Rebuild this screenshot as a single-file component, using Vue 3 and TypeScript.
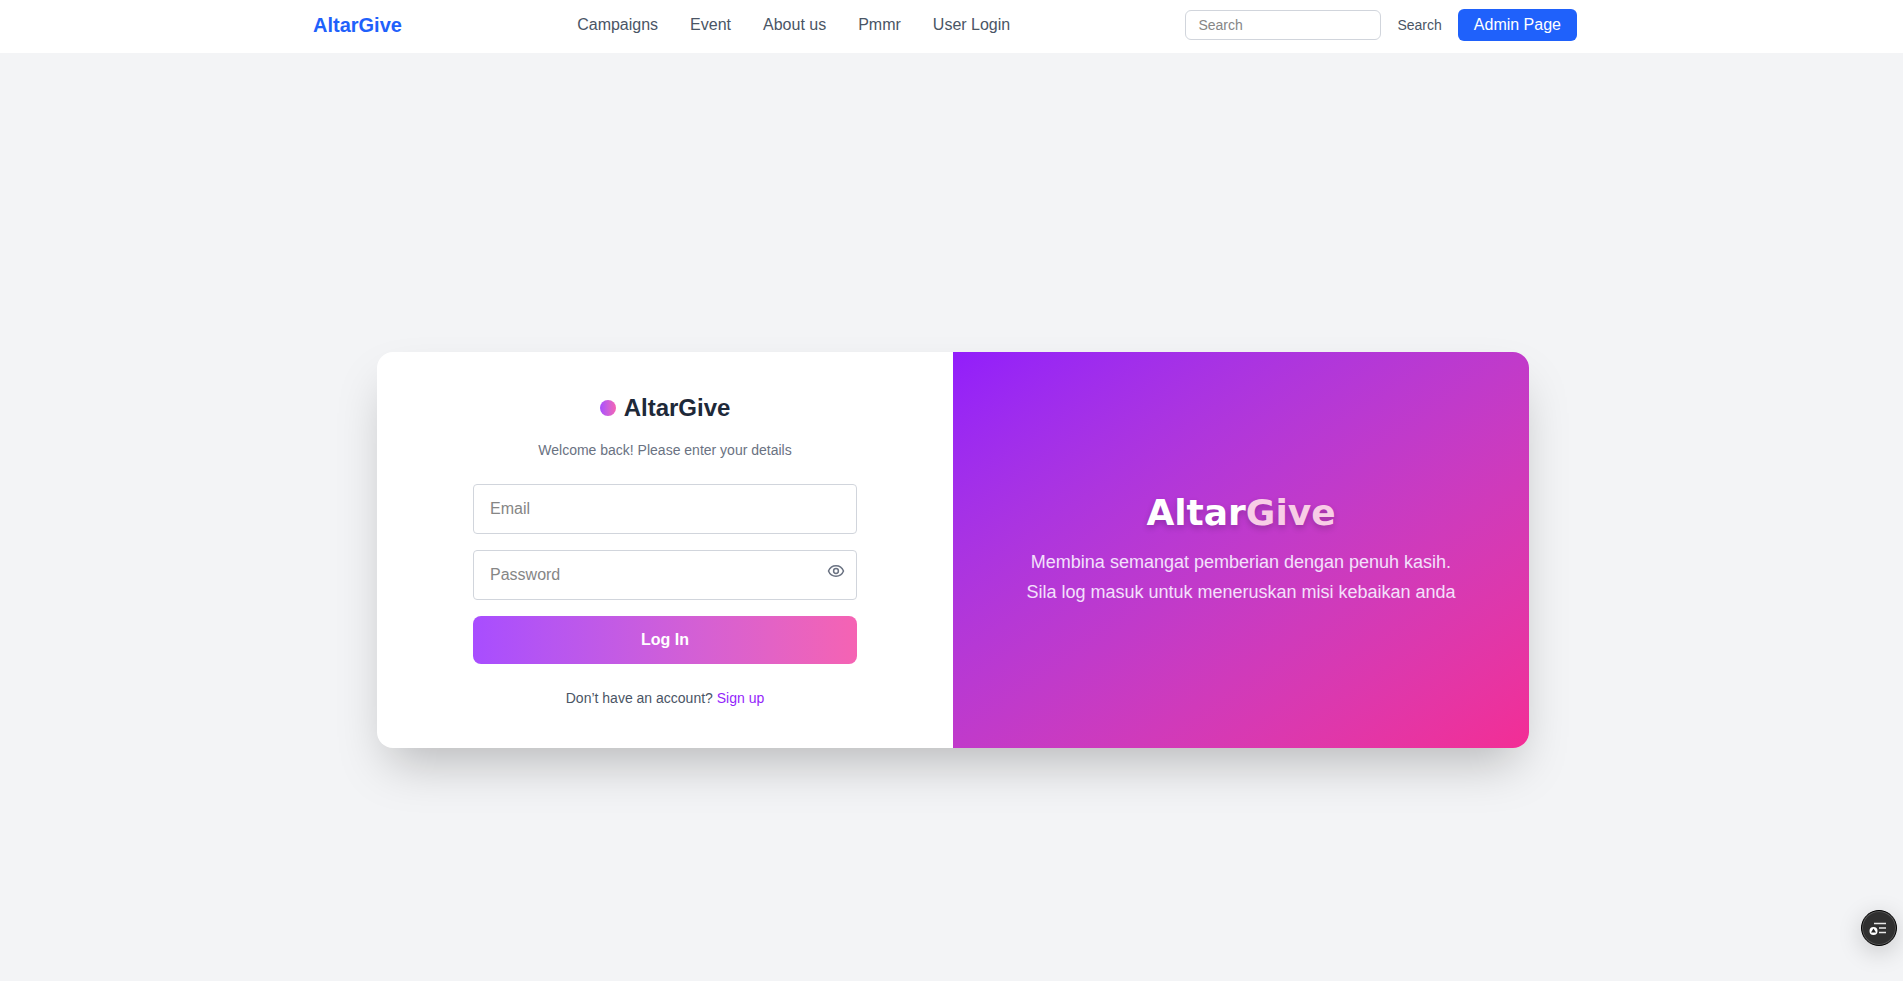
<script setup lang="ts">
import { ref } from 'vue'

const links: string[] = ['Campaigns', 'Event', 'About us', 'Pmmr', 'User Login']
const query = ref('')
const email = ref('')
const password = ref('')
const showPassword = ref(false)
</script>

<template>
  <div class="page">
    <header class="topbar">
      <div class="topbar-inner">
        <a href="#" class="brand">AltarGive</a>
        <nav class="links" aria-label="Main">
          <a v-for="link in links" :key="link" href="#">{{ link }}</a>
        </nav>
        <form class="tools" @submit.prevent>
          <input v-model="query" class="search" type="text" placeholder="Search" aria-label="Search" />
          <button type="submit" class="search-button">Search</button>
          <a href="#" class="admin">Admin Page</a>
        </form>
      </div>
    </header>

    <main class="main">
      <section class="card">
        <div class="login">
          <form class="login-form" @submit.prevent>
            <h1 class="title"><span class="dot"></span>AltarGive</h1>
            <p class="welcome">Welcome back! Please enter your details</p>
            <div class="fields">
              <input v-model="email" class="field" type="email" placeholder="Email" aria-label="Email" />
              <div class="password">
                <input
                  v-model="password"
                  class="field"
                  :type="showPassword ? 'text' : 'password'"
                  placeholder="Password"
                  aria-label="Password"
                />
                <button
                  type="button"
                  class="eye"
                  aria-label="Show password"
                  @click="showPassword = !showPassword"
                >
                  <svg viewBox="0 0 20 20" fill="none" stroke="currentColor" stroke-width="1.5">
                    <path d="M2.500 10C3.800 6.700 6.600 4.800 10 4.800S16.200 6.700 17.500 10C16.200 13.300 13.400 15.200 10 15.200S3.800 13.300 2.500 10Z" />
                    <circle cx="10" cy="10" r="2.400" />
                  </svg>
                </button>
              </div>
              <button type="submit" class="submit">Log In</button>
            </div>
            <p class="signup">Don’t have an account? <a href="#">Sign up</a></p>
          </form>
        </div>
        <div class="promo">
          <h2 class="promo-title">Altar<span>Give</span></h2>
          <p class="promo-text">
            Membina semangat pemberian dengan penuh kasih.<br />
            Sila log masuk untuk meneruskan misi kebaikan anda
          </p>
        </div>
      </section>
    </main>

    <button type="button" class="float" aria-label="Accessibility menu">
      <svg viewBox="0 0 34 34" fill="none">
        <path d="M12 12.500H24M17 17H24M17 21.500H24" stroke="#e8e8e8" stroke-width="1.500" />
        <circle cx="11.500" cy="20" r="4" fill="#fff" />
        <path d="M11.500 17.500L14 21.500H9Z" fill="#222" />
      </svg>
    </button>
  </div>
</template>

<style>
body {
  margin: 0;
}
</style>

<style scoped>
.page {
  min-height: 100vh;
  display: flex;
  flex-direction: column;
  background: #f3f4f6;
  font-family: "Liberation Sans", Arial, sans-serif;
  font-size: 16px;
  line-height: 24px;
}
.page *,
.page {
  box-sizing: border-box;
}
a {
  color: inherit;
  text-decoration: none;
}
button,
input {
  font-family: inherit;
}
button {
  border: 0;
  padding: 0;
  cursor: pointer;
}
h1,
h2,
p {
  margin: 0;
}
input::placeholder {
  color: #868686;
  opacity: 1;
}
.topbar {
  background: #fff;
  padding: 9px 0 12px 3px;
}
.topbar-inner {
  max-width: 1280px;
  margin: 0 auto;
  padding-right: 16px;
  display: flex;
  align-items: center;
  justify-content: space-between;
}
.brand {
  color: #1f61fb;
  font-size: 20px;
  line-height: 28px;
  font-weight: 700;
}
.links {
  display: flex;
  gap: 32px;
  color: #4a5565;
}
.tools {
  display: flex;
  align-items: center;
  gap: 16px;
}
.search {
  width: 196px;
  height: 30px;
  padding: 4px 12px;
  border: 1px solid #d1d5dc;
  border-radius: 6px;
  font-size: 14px;
  background: #fff;
}
.search-button {
  background: none;
  color: #4a5565;
  font-size: 14px;
  line-height: 20px;
}
.admin {
  padding: 4px 16px;
  border-radius: 6px;
  background: #1f61fb;
  color: #fff;
}
.main {
  flex: 1;
  display: flex;
  align-items: center;
  justify-content: center;
  padding: 66px 0 0 3px;
}
.card {
  width: 100%;
  max-width: 1152px;
  display: grid;
  grid-template-columns: 1fr 1fr;
  border-radius: 16px;
  overflow: hidden;
  background: #fff;
  box-shadow: 0 25px 50px -12px rgba(0, 0, 0, 0.25);
}
.login {
  display: flex;
  justify-content: center;
  padding: 40px;
}
.login-form {
  width: 100%;
  max-width: 384px;
  text-align: center;
}
.title {
  display: flex;
  align-items: center;
  justify-content: center;
  gap: 8px;
  color: #1e2939;
  font-size: 24px;
  line-height: 32px;
  font-weight: 700;
}
.dot {
  width: 16px;
  height: 16px;
  border-radius: 50%;
  background: linear-gradient(to right in oklab, #a84dff, #f563b3);
}
.welcome {
  margin: 16px 0 24px;
  color: #6a7282;
  font-size: 14px;
  line-height: 20px;
}
.fields {
  display: grid;
  gap: 16px;
}
.field {
  display: block;
  width: 100%;
  height: 50px;
  padding: 12px 16px;
  border: 1px solid #d1d5dc;
  border-radius: 4px;
  background: #fff;
  font-size: 16px;
}
.password {
  position: relative;
}
.eye {
  position: absolute;
  top: 11px;
  right: 11px;
  width: 20px;
  height: 20px;
  background: none;
  color: #6a7282;
}
.eye svg,
.float svg {
  display: block;
  width: 100%;
  height: 100%;
}
.submit {
  height: 48px;
  border-radius: 8px;
  background: linear-gradient(to right in oklab, #a84dff, #f563b3);
  color: #fff;
  font-size: 16px;
  font-weight: 700;
}
.signup {
  margin-top: 24px;
  color: #4a5565;
  font-size: 14px;
  line-height: 20px;
}
.signup a {
  color: #941ffb;
}
.promo {
  display: flex;
  flex-direction: column;
  align-items: center;
  justify-content: center;
  gap: 14px;
  padding: 40px;
  text-align: center;
  color: #fff;
  background: linear-gradient(to bottom right in oklab, #921dfb, #f32d95);
}
.promo-title {
  font-family: "Arial Black", "DejaVu Sans", sans-serif;
  font-size: 36px;
  line-height: 40px;
  font-weight: 900;
  text-shadow: 0 3px 6px rgba(0, 0, 0, 0.2);
}
.promo-title span {
  color: #f8cde6;
}
.promo-text {
  color: #f3e0fc;
  font-size: 18px;
  line-height: 30px;
}
.float {
  position: fixed;
  right: 6px;
  bottom: 35px;
  width: 36px;
  height: 36px;
  border: 1px solid #000;
  border-radius: 50%;
  background: #303030;
  box-shadow: inset 0 0 0 1px #555, 0 6px 24px rgba(0, 0, 0, 0.18);
}
</style>
